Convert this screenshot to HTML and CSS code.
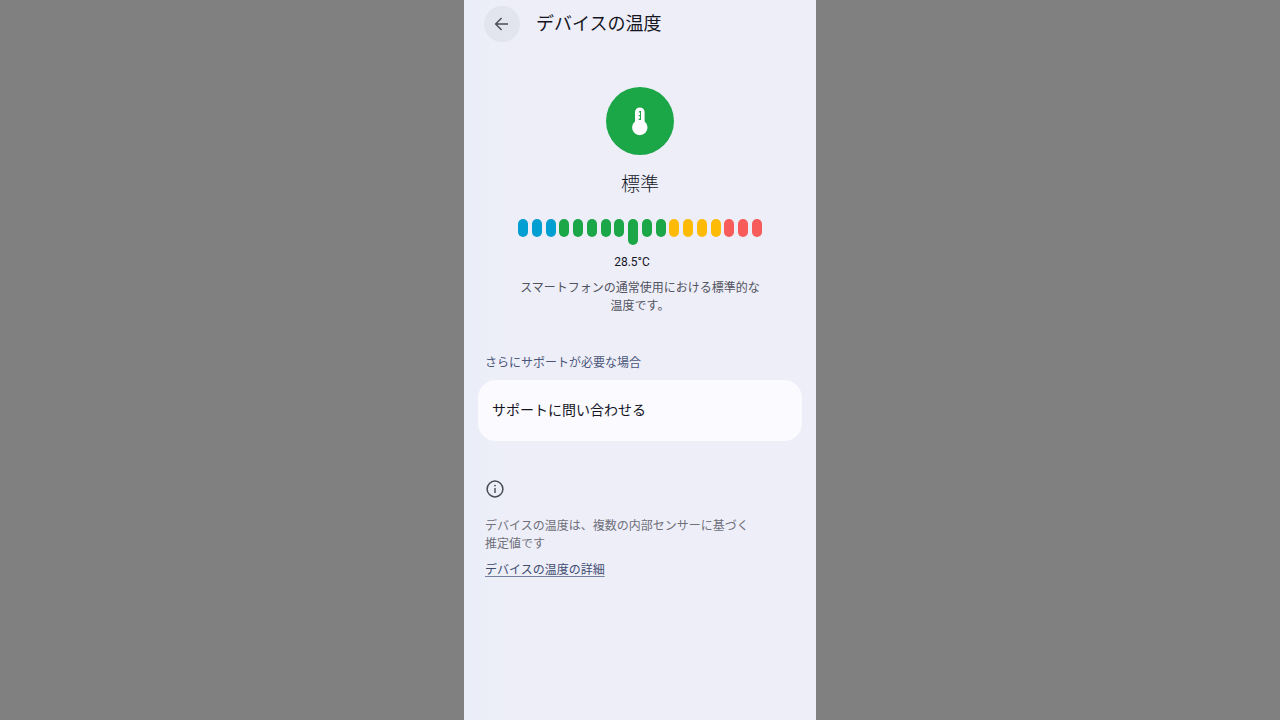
FILE: index.html
```html
<!DOCTYPE html>
<html lang="ja">
<head>
  <meta charset="UTF-8" />
  <meta name="viewport" content="width=device-width, initial-scale=1.0"/>
  <title>デバイスの温度</title>
  <link rel="stylesheet" href="styles.css">
</head>
<body>
  <div class="screen">
    <header class="top-bar">
      <button class="back-btn" type="button" aria-label="戻る">
        <svg width="16" height="16" viewBox="0 0 16 16" fill="none" stroke="#494b57" stroke-width="1.4">
          <path d="M14 8H1.6M7.6 2L1.6 8L7.6 14"/>
        </svg>
      </button>
      <h1 class="title">デバイスの温度</h1>
    </header>

    <main>
      <section class="status">
        <svg class="status-icon" width="68" height="68" viewBox="0 0 68 68">
          <circle cx="34" cy="34" r="34" fill="#1ba648"/>
          <path d="M29 25.2a4.8 4.8 0 0 1 9.6 0v9.4a7.7 7.7 0 1 1-9.6 0z" fill="#fff"/>
          <path d="M34.5 24.2v8.8" stroke="#1ba648" stroke-width="1"/>
          <path d="M32.8 24.9h2.2M32.8 28.6h2.2M32.8 32.3h2.2" stroke="#1ba648" stroke-width="1.4"/>
        </svg>
        <h2 class="status-name">標準</h2>
        <div class="gauge" role="img" aria-label="28.5°C">
          <span class="bar cool"></span>
          <span class="bar cool"></span>
          <span class="bar cool"></span>
          <span class="bar normal"></span>
          <span class="bar normal"></span>
          <span class="bar normal"></span>
          <span class="bar normal"></span>
          <span class="bar normal"></span>
          <span class="bar normal current"></span>
          <span class="bar normal"></span>
          <span class="bar normal"></span>
          <span class="bar warm"></span>
          <span class="bar warm"></span>
          <span class="bar warm"></span>
          <span class="bar warm"></span>
          <span class="bar hot"></span>
          <span class="bar hot"></span>
          <span class="bar hot"></span>
        </div>
        <p class="degrees">28.5°C</p>
        <p class="description">スマートフォンの通常使用における標準的な<br>温度です。</p>
      </section>

      <section class="support">
        <h2 class="section-title">さらにサポートが必要な場合</h2>
        <a class="support-card" href="#support">サポートに問い合わせる</a>
      </section>

      <footer class="info">
        <svg class="info-icon" width="20" height="20" viewBox="0 0 20 20">
          <circle cx="10" cy="10" r="7.9" fill="none" stroke="#484a54" stroke-width="1.5"/>
          <path d="M10 9v5" stroke="#484a54" stroke-width="1.4"/>
          <circle cx="10" cy="6.6" r="0.9" fill="#484a54"/>
        </svg>
        <p class="info-text">デバイスの温度は、複数の内部センサーに基づく<br>推定値です</p>
        <a class="info-link" href="#details">デバイスの温度の詳細</a>
      </footer>
    </main>
  </div>
</body>
</html>
```
FILE: styles.css
```css
* {
  margin: 0;
  padding: 0;
  box-sizing: border-box;
}

body {
  background-color: #808080;
  font-family: Roboto, 'Noto Sans CJK JP', sans-serif;
  font-size: 12px;
  line-height: 18px;
  color: #14151f;
}

h1,
h2 {
  font-weight: 400;
}

.screen {
  max-width: 352px;
  min-height: 100vh;
  margin: 0 auto;
  padding: 6px 14px 24px;
  background: linear-gradient(90deg, #eaeef8, #edeef8 12%);
}

.top-bar {
  display: flex;
  align-items: center;
  gap: 16px;
  padding: 0 6px;
}

.back-btn {
  display: flex;
  align-items: center;
  justify-content: center;
  width: 36px;
  height: 36px;
  border: none;
  border-radius: 50%;
  background: #e2e4ee;
  cursor: pointer;
}

.title {
  font-size: 18px;
  line-height: 28px;
}

.status {
  display: flex;
  flex-direction: column;
  align-items: center;
  margin-top: 45px;
  text-align: center;
}

.status-name {
  margin-top: 16px;
  font-size: 19px;
  font-weight: 300;
  line-height: 28px;
}

.gauge {
  display: flex;
  justify-content: space-between;
  align-self: stretch;
  margin: 20px 40px 0;
}

.bar {
  width: 10px;
  height: 18px;
  border-radius: 5px;
}

.bar.current {
  height: 26px;
}

.cool {
  background: #049fd2;
}

.normal {
  background: #1ba648;
}

.warm {
  background: #fdbb06;
}

.hot {
  background: #f75b5a;
}

/* keeps the reading under the current bar */
.degrees {
  margin-top: 8px;
  padding-right: 16px;
}

.description {
  margin-top: 8px;
  color: #52535e;
}

.support {
  margin-top: 39px;
}

.section-title {
  padding: 0 7px;
  font-size: 12px;
  line-height: 18px;
  color: #4a5578;
}

.support-card {
  display: block;
  margin-top: 8px;
  padding: 20px 14px;
  border-radius: 18px;
  background: #fafaff;
  font-size: 14px;
  line-height: 21px;
  color: #14151f;
  text-decoration: none;
}

.info {
  margin-top: 38px;
  padding: 0 7px;
}

.info-icon {
  display: block;
}

.info-text {
  margin-top: 18px;
  color: #6f707a;
}

.info-link {
  display: inline-block;
  margin-top: 8px;
  color: #3f4c70;
  text-decoration-color: #7681a0;
  text-underline-offset: 2px;
}
```
